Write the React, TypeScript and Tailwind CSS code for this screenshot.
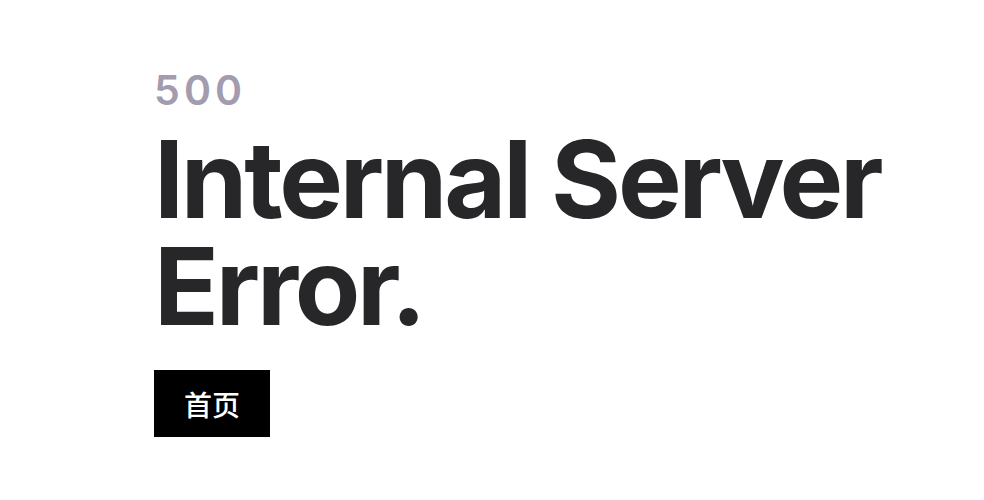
export default function App() {
  return (
    <div
      className="min-h-[500px] w-full bg-white pl-[154px] pt-[64px]"
      style={{ fontFamily: "Inter, 'Noto Sans CJK SC', sans-serif" }}
    >
      <p className="text-[41px] font-semibold leading-[52px] tracking-[0.1em] text-[#a39bae]">
        500
      </p>
      <h1 className="mt-[10px] text-[107px] font-bold leading-[107px] tracking-[-0.03em] text-[#27272a]">
        Internal Server
        <br />
        Error.
      </h1>
      <div className="mt-[30px]">
        <button
          type="button"
          className="h-[67px] w-[116px] bg-black text-[28px] font-medium text-white"
          style={{ fontFamily: "'Noto Sans CJK SC', sans-serif" }}
        >
          首页
        </button>
      </div>
    </div>
  );
}
